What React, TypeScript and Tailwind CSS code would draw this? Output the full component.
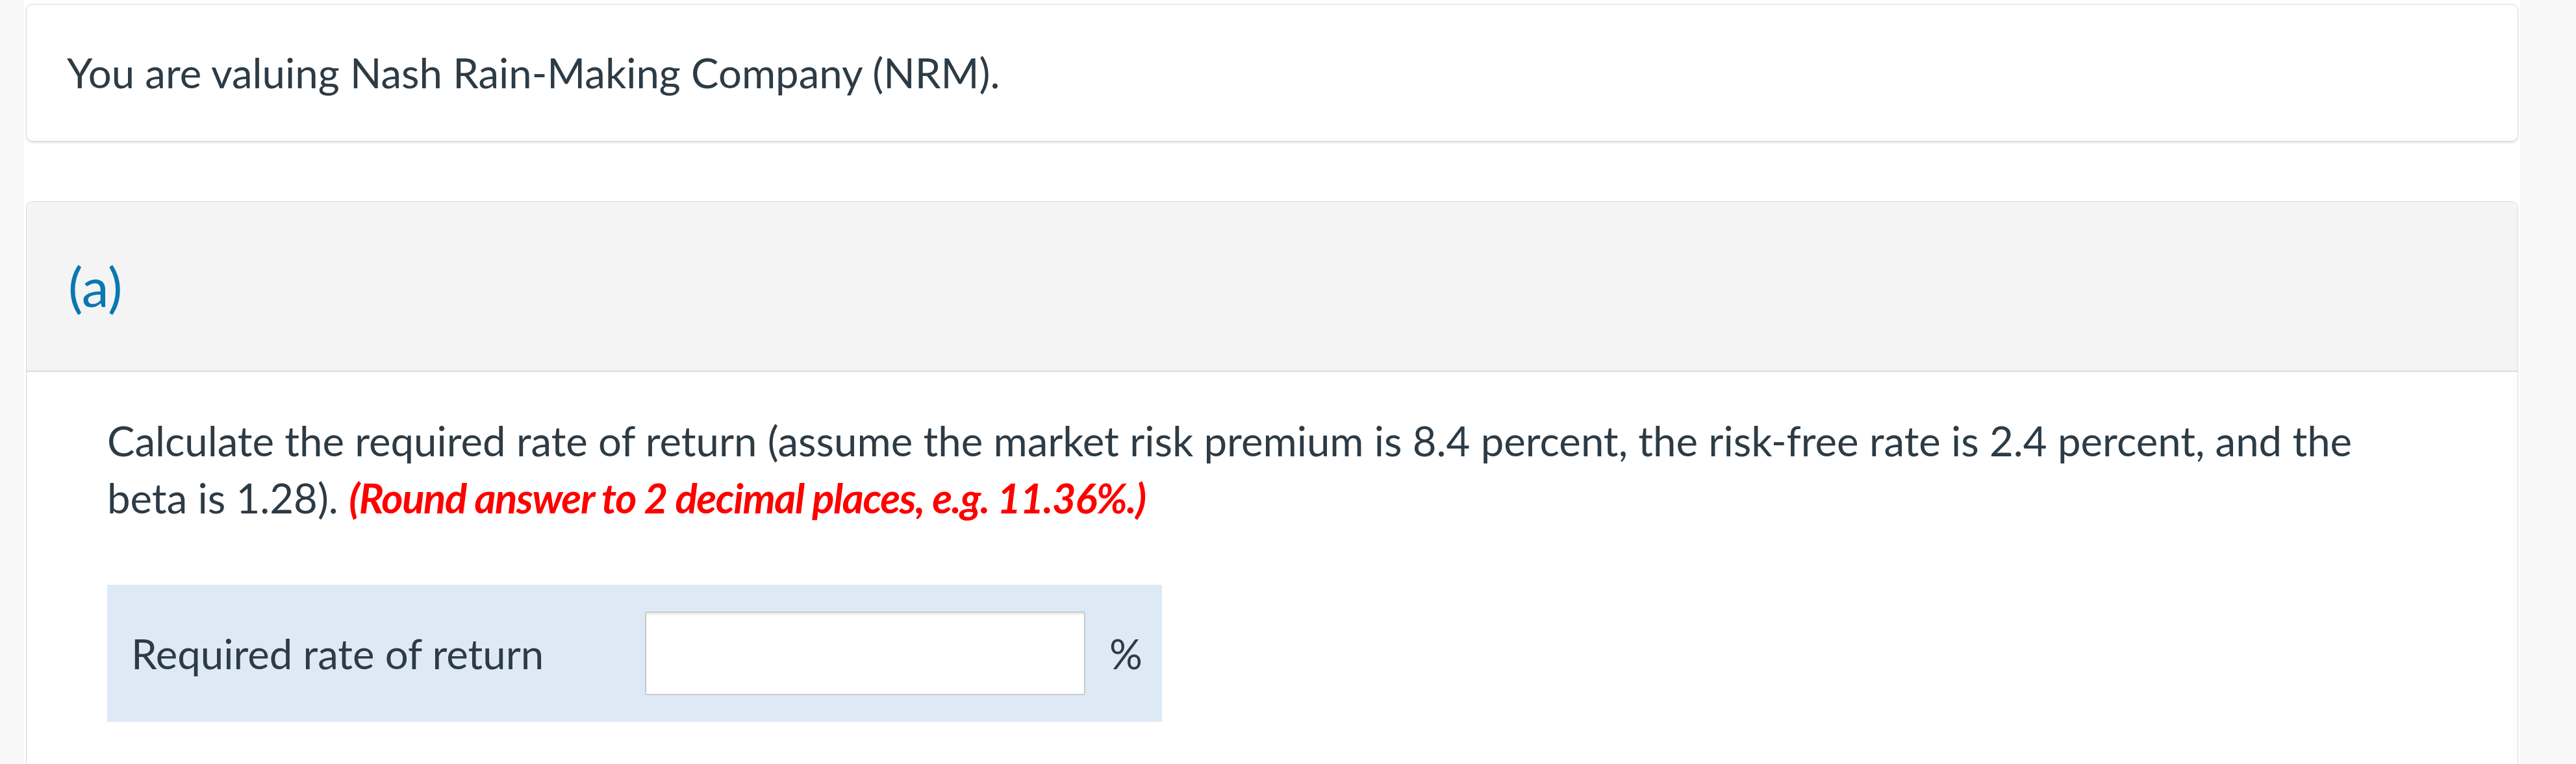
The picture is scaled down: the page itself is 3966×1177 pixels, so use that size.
import React from "react";

export default function App() {
  return (
    <div className="h-[1177px] w-full overflow-hidden bg-[#f8f8f8] font-['Lato','Noto_Sans',sans-serif] text-[#2d3b45]">
      <div className="ml-[37px] h-full w-[3843px] bg-white px-[3px] pt-[6px]">
        <div className="flex h-[212px] items-center rounded-[10px] border border-[#d9d9d9] pl-[62px] shadow-[0_2px_3px_rgba(0,0,0,0.12)]">
          <p className="text-[63.5px] leading-[88px]">You are valuing Nash Rain-Making Company (NRM).</p>
        </div>

        <div className="mt-[92px] h-[900px] rounded-t-[10px] border border-[#d9d9d9]">
          <div className="flex h-[262px] items-center rounded-t-[10px] border-b-2 border-[#dcdcdc] bg-[#f4f4f4] pl-[64px]">
            <h2 className="text-[84px] leading-[1.2] text-[#0a78b2]">(a)</h2>
          </div>
          <div className="px-[124px] pt-[62px]">
            <p className="text-[63.5px] leading-[88px]">
              Calculate the required rate of return (assume the market risk premium is 8.4 percent, the risk-free rate is 2.4 percent, and the
              <br />
              beta is 1.28).{" "}
              <span className="font-bold italic tracking-[-1.4px] text-[#ff0000]">(Round answer to 2 decimal places, e.g. 11.36%.)</span>
            </p>

            <div className="mt-[90px] flex h-[211px] w-[1624px] items-center bg-[#dee9f6] pl-[37px]">
              <span className="w-[791px] text-[63.5px] leading-[88px]">Required rate of return</span>
              <div className="h-[129px] w-[678px] rounded-[3px] border-2 border-[#c9cbce] bg-white shadow-[inset_0_3px_3px_rgba(0,0,0,0.08)]" />
              <span className="ml-[37px] text-[63.5px] leading-[88px]">%</span>
            </div>
          </div>
        </div>
      </div>
    </div>
  );
}
